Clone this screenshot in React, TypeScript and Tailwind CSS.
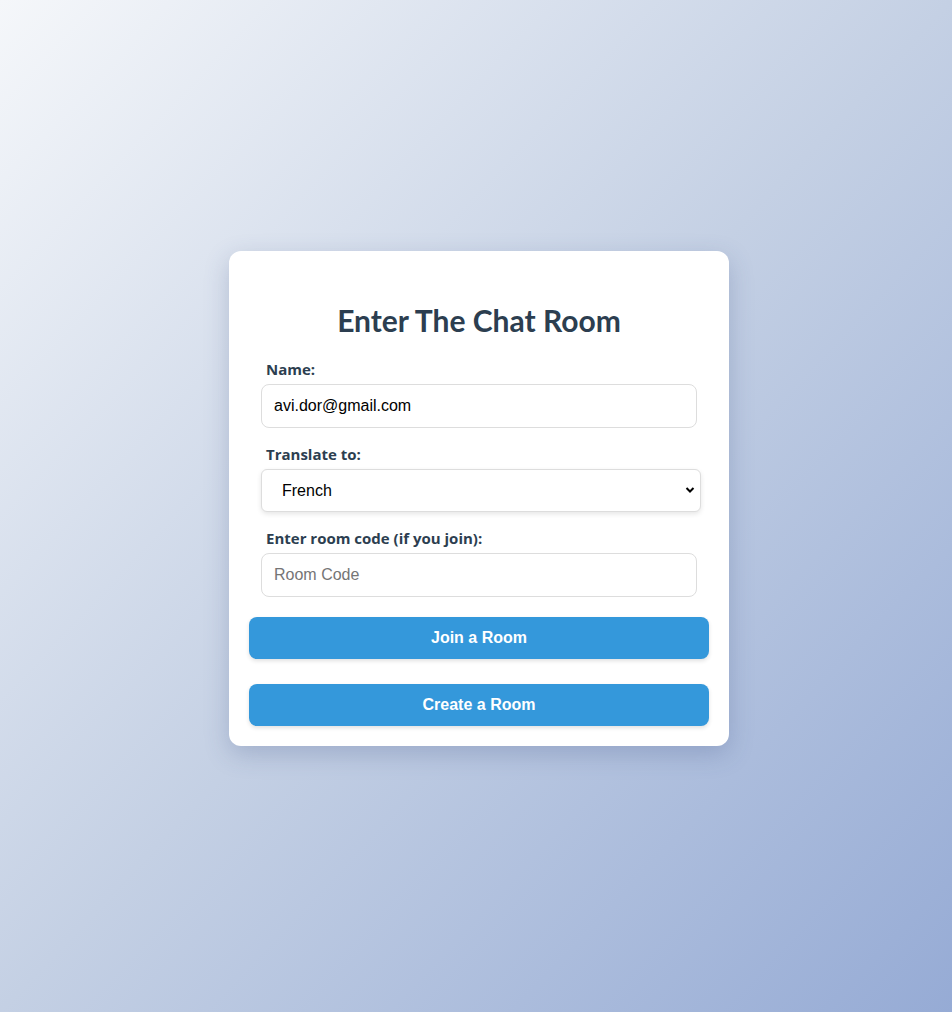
import { useState } from 'react';

export default function App() {
  const [name, setName] = useState('avi.dor@gmail.com');
  const [lang, setLang] = useState('fr');
  const [code, setCode] = useState('');

  return (
    <div className="min-h-screen w-full flex items-center justify-center pl-[6px] pb-[15px] bg-gradient-to-br from-[#f5f7fa] via-[#c4d0e4] to-[#96abd5]">
      <div className="w-[500px] bg-white rounded-xl p-5 shadow-[0_8px_24px_rgba(60,80,130,0.25)]">
        <h2 className="mt-[30px] mb-5 text-center text-[30px] leading-[38px] font-bold text-[#2c3e50] [font-family:Lato,sans-serif]">
          Enter The Chat Room
        </h2>

        <div className="px-3 flex flex-col">
          <label className="ml-[5px] mb-[5px] text-[15px] leading-[20px] font-bold text-[#2c3e50] [font-family:'Open_Sans',sans-serif]">
            Name:
          </label>
          <input
            value={name}
            onChange={e => setName(e.target.value)}
            className="w-[436px] h-[44px] px-3 border border-[#dddddd] rounded-lg text-base text-black outline-none [font-family:'Liberation_Sans',Arial,sans-serif]"
          />

          <label className="ml-[5px] mt-4 mb-[5px] text-[15px] leading-[20px] font-bold text-[#2c3e50] [font-family:'Open_Sans',sans-serif]">
            Translate to:
          </label>
          <div className="relative w-[440px]">
            <select
              value={lang}
              onChange={e => setLang(e.target.value)}
              className="appearance-none w-[440px] h-[43px] pl-5 pr-8 border border-[#dddddd] rounded-md bg-white text-base text-black shadow-[0_2px_5px_rgba(0,0,0,0.1)] outline-none [font-family:'Liberation_Sans',Arial,sans-serif]"
            >
              <option value="en">English</option>
              <option value="fr">French</option>
              <option value="es">Spanish</option>
              <option value="he">Hebrew</option>
            </select>
            <svg className="absolute right-[6px] top-[17px] pointer-events-none" width="10" height="8" viewBox="0 0 10 8">
              <path d="M1.5 2 L5 5.5 L8.5 2" fill="none" stroke="#000" strokeWidth="2" />
            </svg>
          </div>

          <label className="ml-[5px] mt-4 mb-[5px] text-[15px] leading-[20px] font-bold text-[#2c3e50] [font-family:'Open_Sans',sans-serif]">
            Enter room code (if you join):
          </label>
          <input
            value={code}
            onChange={e => setCode(e.target.value)}
            placeholder="Room Code"
            className="w-[436px] h-[44px] px-3 border border-[#dddddd] rounded-lg text-base text-black placeholder:text-[#757575] outline-none [font-family:'Liberation_Sans',Arial,sans-serif]"
          />
        </div>

        <button className="mt-5 w-full h-[42px] rounded-lg bg-[#3498db] text-white text-base font-bold shadow-[0_2px_4px_rgba(0,0,0,0.12)] [font-family:'Liberation_Sans',Arial,sans-serif]">
          Join a Room
        </button>
        <button className="mt-[25px] w-full h-[42px] rounded-lg bg-[#3498db] text-white text-base font-bold shadow-[0_2px_4px_rgba(0,0,0,0.12)] [font-family:'Liberation_Sans',Arial,sans-serif]">
          Create a Room
        </button>
      </div>
    </div>
  );
}
